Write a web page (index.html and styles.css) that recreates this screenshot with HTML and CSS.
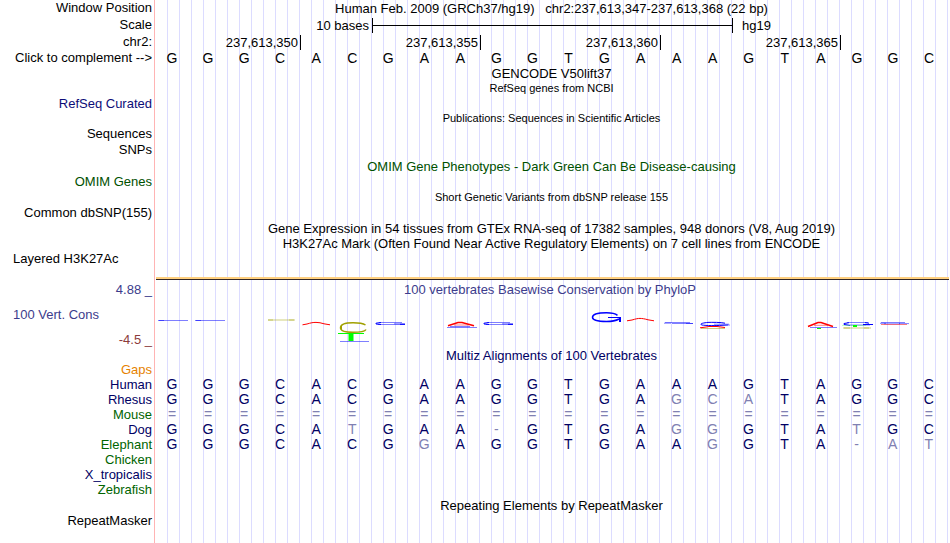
FILE: index.html
```html
<!DOCTYPE html>
<html lang="en">
<head>
<meta charset="utf-8">
<title>Human Feb. 2009 (GRCh37/hg19)</title>
<link rel="stylesheet" href="styles.css">
</head>
<body>
<main class="browser">
  <div class="row tall"><div class="label">Window Position</div><div class="title">Human Feb. 2009 (GRCh37/hg19) &nbsp; chr2:237,613,347-237,613,368 (22 bp)</div></div>
  <div class="row scale"><div class="label">Scale</div>
    <div class="ruler"><span class="scale-name">10 bases</span><span class="scale-bar"></span><span class="scale-db">hg19</span></div>
  </div>
  <div class="row tall"><div class="label">chr2:</div>
    <div class="ruler"><span class="tick first">237,613,350</span><span class="tick">237,613,355</span><span class="tick">237,613,360</span><span class="tick">237,613,365</span></div>
  </div>
  <div class="row"><div class="label">Click to complement --&gt;</div>
    <div class="bases"><span>G</span><span>G</span><span>G</span><span>C</span><span>A</span><span>C</span><span>G</span><span>A</span><span>A</span><span>G</span><span>G</span><span>T</span><span>G</span><span>A</span><span>A</span><span>A</span><span>G</span><span>T</span><span>A</span><span>G</span><span>G</span><span>C</span></div>
  </div>
  <div class="row tall"><div class="title">GENCODE V50lift37</div></div>
  <div class="row"><div class="title small">RefSeq genes from NCBI</div></div>
  <div class="row"><div class="label refseq">RefSeq Curated</div></div>
  <div class="row"><div class="title small">Publications: Sequences in Scientific Articles</div></div>
  <div class="row tall"><div class="label">Sequences</div></div>
  <div class="row tall"><div class="label">SNPs</div></div>
  <div class="row tall"><div class="title omim">OMIM Gene Phenotypes - Dark Green Can Be Disease-causing</div></div>
  <div class="row"><div class="label omim">OMIM Genes</div></div>
  <div class="row tall"><div class="title small">Short Genetic Variants from dbSNP release 155</div></div>
  <div class="row"><div class="label">Common dbSNP(155)</div></div>
  <div class="row tall"><div class="title">Gene Expression in 54 tissues from GTEx RNA-seq of 17382 samples, 948 donors (V8, Aug 2019)</div></div>
  <div class="row"><div class="title">H3K27Ac Mark (Often Found Near Active Regulatory Elements) on 7 cell lines from ENCODE</div></div>
  <div class="row"><div class="label start">Layered H3K27Ac</div></div>
  <div class="row signal"><div class="signal-bar"></div></div>

  <div class="row conservation">
    <div class="axis">
      <div class="label phylop">4.88 _</div>
      <div class="label start phylop">100 Vert. Cons</div>
      <div class="label negative">-4.5 _</div>
    </div>
    <div class="plot">
      <div class="title phylop">100 vertebrates Basewise Conservation by PhyloP</div>
      <svg class="logo" viewBox="154 297 793 50" preserveAspectRatio="none" role="img" aria-label="Basewise conservation scores">
        <g class="blue">
          <path class="soft" d="M158 320.500H188M195 320.500H225"/>
          <path class="soft" d="M159 320.500H164M196 320.500H201"/>
          <path class="soft" d="M340 341.500H369"/>
          <path class="soft" d="M379 322.500H402M378 324.500H405M394 323.800H405"/>
          <path d="M381 322.500L376 323.200V324L381 324.500M400 324.300H405"/>
          <path class="soft" d="M487 322.500H510M486 324.500H513M502 323.800H513"/>
          <path d="M489 322.500L484 323.200V324L489 324.500M508 324.300H513"/>
          <path class="soft" d="M447 327.500H477M810 327.500H837M450 326.500H470"/>
          <path class="medium" d="M617.500 315.300C615 313.300 611 312.700 606.500 312.700C598 312.700 592.500 314.500 592.500 317.300C592.500 320 598 321.500 606.500 321.500C612 321.500 616 320.600 619 319"/>
          <path d="M608 317.500H620.500"/><path class="bold" d="M620 317V322"/>
          <path class="soft" d="M665 322.500H690M672 323.500H693"/><path class="soft" d="M664 323.200H671M686 323.500H693"/>
          <path d="M725 323.200C721 322.200 712 322.300 708 322.400C702 323 699 324 702 325C706 325.700 716 325.700 722 325.300L728 325"/>
          <path class="soft" d="M714 324.200H729V326"/>
          <path class="soft" d="M847 322.500H868M850 325H870"/>
          <path d="M849 322.700L844 323.500V324.500L850 325.300M863 324.500H873M865 322.600L869 323.200"/>
          <path class="soft" d="M881 322.500H905M884 323.800H900"/><path class="soft" d="M880 323.300H886M899 323.600H909"/>
        </g>
        <g class="olive">
          <path class="soft" d="M268 320H295"/><path class="soft" d="M268 320H273M289 320H294"/>
          <path class="medium" d="M365.500 325C363 323.300 358 322.700 353 322.700C345 322.700 340.500 324.800 340.500 327.700C340.500 330.700 346 332.300 353 332.300C360 332.300 365 331.300 366 329.500"/>
          <path d="M341.500 325.500V330"/>
          <path class="soft" d="M701 328.500H725M843 328H871"/><path class="soft" d="M844 328H850M864 328H869"/>
        </g>
        <g class="green">
          <path d="M338 333.500H364"/><path class="stem" d="M351 333V341"/>
          <path class="foot" d="M853 326H857"/><path d="M817 328.500H821"/>
          <path class="faint" d="M842 325.500H866"/>
        </g>
        <g class="red">
          <path d="M302.500 324.800L307 324C311 322.800 313 322.400 316 322.400S321 322.900 324 323.800L330 324.800"/>
          <path d="M627 320.800L632 320C636 318.800 638 318.400 640 318.400S645 318.900 648 319.800L654 320.800"/>
          <path class="medium" d="M448 325.800L458 322.600H462L474 325.800"/><path class="soft" d="M454 325H469"/>
          <path class="medium" d="M808 326.500L818 322.600H821L833 326.500"/><path class="soft" d="M814 325.300H828"/>
          <path d="M700 327.800L706 327L709 326.500H717L725 327.500"/>
          <path class="soft" d="M881 324.500H907"/>
        </g>
      </svg>
    </div>
  </div>
  <div class="row tall"><div class="title multiz">Multiz Alignments of 100 Vertebrates</div></div>

  <table class="alignment">
    <tbody>
      <tr><th class="label gaps" scope="row">Gaps</th><td colspan="22"></td></tr>
      <tr><th class="label" scope="row">Human</th><td>G</td><td>G</td><td>G</td><td>C</td><td>A</td><td>C</td><td>G</td><td>A</td><td>A</td><td>G</td><td>G</td><td>T</td><td>G</td><td>A</td><td>A</td><td>A</td><td>G</td><td>T</td><td>A</td><td>G</td><td>G</td><td>C</td></tr>
      <tr><th class="label" scope="row">Rhesus</th><td>G</td><td>G</td><td>G</td><td>C</td><td>A</td><td>C</td><td>G</td><td>A</td><td>A</td><td>G</td><td>G</td><td>T</td><td>G</td><td>A</td><td class="diff">G</td><td class="diff">C</td><td class="diff">A</td><td>T</td><td>A</td><td>G</td><td>G</td><td>C</td></tr>
      <tr class="unaligned"><th class="label alt" scope="row">Mouse</th><td>=</td><td>=</td><td>=</td><td>=</td><td>=</td><td>=</td><td>=</td><td>=</td><td>=</td><td>=</td><td>=</td><td>=</td><td>=</td><td>=</td><td>=</td><td>=</td><td>=</td><td>=</td><td>=</td><td>=</td><td>=</td><td>=</td></tr>
      <tr><th class="label" scope="row">Dog</th><td>G</td><td>G</td><td>G</td><td>C</td><td>A</td><td class="diff">T</td><td>G</td><td>A</td><td>A</td><td class="diff">-</td><td>G</td><td>T</td><td>G</td><td>A</td><td class="diff">G</td><td class="diff">G</td><td>G</td><td>T</td><td>A</td><td class="diff">T</td><td>G</td><td>C</td></tr>
      <tr><th class="label alt" scope="row">Elephant</th><td>G</td><td>G</td><td>G</td><td>C</td><td>A</td><td>C</td><td>G</td><td class="diff">G</td><td>A</td><td>G</td><td>G</td><td>T</td><td>G</td><td>A</td><td>A</td><td class="diff">G</td><td>G</td><td>T</td><td>A</td><td class="diff">-</td><td class="diff">A</td><td class="diff">T</td></tr>
      <tr><th class="label alt" scope="row">Chicken</th><td colspan="22"></td></tr>
      <tr><th class="label" scope="row">X_tropicalis</th><td colspan="22"></td></tr>
      <tr><th class="label alt" scope="row">Zebrafish</th><td colspan="22"></td></tr>
    </tbody>
  </table>
  <div class="row tall"><div class="title">Repeating Elements by RepeatMasker</div></div>
  <div class="row"><div class="label">RepeatMasker</div></div>
</main>
</body>
</html>
```
FILE: styles.css
```css
* { box-sizing: border-box; }

body {
  margin: 0;
  background: #fff;
  color: #000;
  font: 13px/15px "Liberation Sans", Arial, sans-serif;
}

/* Left mask with the red divider, over guide lines every 12px */
.browser {
  min-height: 100vh;
  background-image:
    linear-gradient(to right, #fff 154px, #ffb4b4 154px, #ffb4b4 155px, #fff 155px),
    linear-gradient(to right, #dcdcff 1px, transparent 1px);
  background-size: 156px 100%, 12px 100%;
  background-position: 0 0, 155px 0;
  background-repeat: no-repeat, repeat;
}

.row {
  display: grid;
  grid-template-columns: 154px 1fr;
  align-items: center;
  height: 15px;
}
.row.tall { height: 16px; }
.row.scale { height: 18px; }

.label {
  padding: 0 2px 0 0;
  text-align: right;
  font-weight: normal;
  white-space: nowrap;
}
.label.start { padding-left: 13px; text-align: left; }
.row > .label { padding-bottom: 1px; }

.title {
  grid-column: 2;
  padding-right: 1px;
  text-align: center;
  white-space: nowrap;
}
.small { font-size: 11px; }

.refseq { color: #0c0c78; }
.omim { color: #005000; }
.phylop { color: #3c3c8c; }
.negative { color: #8c3c3c; }
.multiz { color: #000064; }

.ruler {
  display: grid;
  grid-template-columns: repeat(22, 1fr);
  align-items: center;
  height: 100%;
  padding: 0 1px 0 3px;
}
.tick {
  grid-column: span 5;
  border-right: 1px solid #000;
  padding-right: 2px;
  text-align: right;
}
.tick.first { grid-column: span 4; }
.scale-name { grid-column: span 6; padding-right: 4px; text-align: right; }
.scale-bar {
  grid-column: span 10;
  height: 15px;
  margin-left: -1px;
  border: solid #000;
  border-width: 0 1px;
  background: linear-gradient(#000, #000) center / 100% 1px no-repeat;
}
.scale-db { grid-column: span 6; padding-left: 9px; }

.bases {
  display: grid;
  grid-template-columns: repeat(22, 1fr);
  padding-right: 3px;
  font-size: 14px;
  text-align: center;
}

.row.signal { height: 16px; padding-bottom: 2px; align-items: end; }
.signal-bar {
  grid-column: 2;
  height: 3px;
  margin: 0 1px 0 2px;
  background: #322828;
  border-top: 2px solid #ffd080;
}

.row.conservation { height: 65px; }
.axis {
  display: flex;
  flex-direction: column;
  justify-content: space-between;
  height: 100%;
}
.plot { display: flex; flex-direction: column; height: 100%; padding-right: 3px; }
.logo { display: block; width: 100%; height: 50px; fill: none; stroke-width: 1; }
.logo .blue { stroke: #0000ff; }
.logo .olive { stroke: #a0a000; }
.logo .green { stroke: #00ff00; }
.logo .red { stroke: #ff0000; }
.logo .soft { opacity: 0.5; }
.logo .faint { opacity: 0.25; }
.logo .medium { stroke-width: 1.5; }
.logo .bold { stroke-width: 2; }
.logo .stem { stroke-width: 5; }
.logo .foot { stroke-width: 2; }

.alignment {
  width: calc(100% - 3px);
  table-layout: fixed;
  border-collapse: collapse;
  margin-top: -1px;
  color: #000064;
}
.alignment th { width: 154px; }
.alignment td {
  height: 15px;
  padding: 0;
  font-size: 14px;
  text-align: center;
}
.alignment .gaps { color: #e68200; }
.alignment .alt { color: #006400; }
.alignment .diff, .alignment .unaligned td { color: #8080b2; }
```
